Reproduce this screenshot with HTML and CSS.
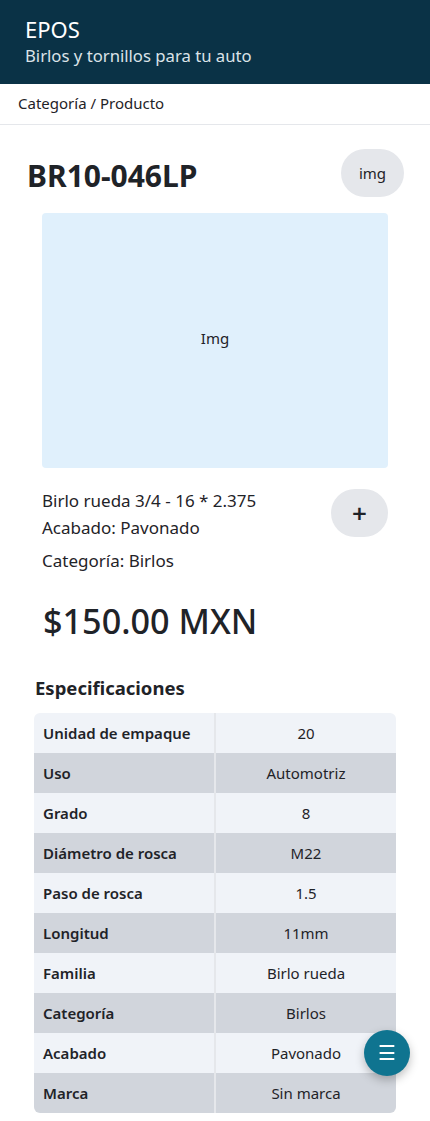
FILE: index.html
```html
<!DOCTYPE html>
<html lang="es">
<head>
<meta charset="utf-8">
<title>EPOS</title>
<link rel="stylesheet" href="styles.css">
</head>
<body>
<header class="topbar">
  <h1 class="brand">EPOS</h1>
  <p class="tagline">Birlos y tornillos para tu auto</p>
</header>
<nav class="crumbs">Categoría / Producto</nav>
<main class="product">
  <div class="title-row">
    <h2 class="sku">BR10-046LP</h2>
    <button class="pill">img</button>
  </div>
  <div class="photo">Img</div>
  <div class="info-row">
    <div class="info">
      <p class="line">Birlo rueda 3/4 - 16 * 2.375</p>
      <p class="line">Acabado: Pavonado</p>
      <p class="line cat">Categoría: Birlos</p>
    </div>
    <button class="pill plus">+</button>
  </div>
  <p class="price">$150.00 MXN</p>
  <section class="specs">
    <h3 class="specs-title">Especificaciones</h3>
    <div class="table">
      <div class="row"><div class="k">Unidad de empaque</div><div class="v">20</div></div>
      <div class="row alt"><div class="k">Uso</div><div class="v">Automotriz</div></div>
      <div class="row"><div class="k">Grado</div><div class="v">8</div></div>
      <div class="row alt"><div class="k">Diámetro de rosca</div><div class="v">M22</div></div>
      <div class="row"><div class="k">Paso de rosca</div><div class="v">1.5</div></div>
      <div class="row alt"><div class="k">Longitud</div><div class="v">11mm</div></div>
      <div class="row"><div class="k">Familia</div><div class="v">Birlo rueda</div></div>
      <div class="row alt"><div class="k">Categoría</div><div class="v">Birlos</div></div>
      <div class="row"><div class="k">Acabado</div><div class="v">Pavonado</div></div>
      <div class="row alt"><div class="k">Marca</div><div class="v">Sin marca</div></div>
    </div>
  </section>
</main>
<button class="fab">☰</button>
</body>
</html>
```
FILE: styles.css
```css
* { box-sizing: border-box; }
body {
  margin: 0;
  font-family: "Noto Sans", "Open Sans", sans-serif;
  color: #1f2328;
  background: #fff;
}
.topbar {
  background: #0a3246;
  color: #fff;
  height: 84px;
  padding: 14px 25px 0;
}
.brand {
  margin: 0;
  font-size: 22px;
  font-weight: 400;
  line-height: 30px;
}
.tagline {
  margin: 1px 0 0;
  font-size: 16.7px;
  line-height: 22px;
  color: #dbe3e8;
}
.crumbs {
  height: 41px;
  padding: 9px 18px 0;
  font-size: 15px;
  line-height: 21px;
  border-bottom: 1px solid #e5e7eb;
}
.product {
  padding: 24px 26px 0 26px;
}
.title-row {
  display: flex;
  justify-content: space-between;
  align-items: center;
  height: 48px;
}
.sku {
  margin: 0;
  font-size: 30px;
  font-weight: 700;
  padding-left: 1px;
  line-height: 40px;
  padding-top: 5px;
}
.pill {
  border: none;
  background: #e5e7eb;
  border-radius: 24px;
  height: 48px;
  width: 63px;
  font-family: inherit;
  font-size: 15px;
  color: #1f2328;
}
.photo {
  margin: 16px 16px 0;
  height: 255px;
  background: #e0f0fc;
  border-radius: 4px;
  display: flex;
  align-items: center;
  justify-content: center;
  font-size: 15px;
  padding-bottom: 6px;
}
.info-row {
  display: flex;
  justify-content: space-between;
  align-items: flex-start;
  margin: 21px 16px 0;
}
.line {
  margin: 0;
  font-size: 17px;
  line-height: 27px;
}
.line:first-child { margin-top: -2px; }
.line.cat { margin-top: 6px; }
.plus {
  width: 57px;
  font-size: 26px;
  font-weight: 600;
  line-height: 1;
}
.price {
  margin: 22px 0 0 17px;
  font-size: 34.2px;
  line-height: 50px;
  font-weight: 500;
}
.specs { margin: 29px 0 0 8px; width: 362px; }
.specs-title {
  margin: 0 0 12px 1px;
  font-size: 18.5px;
  font-weight: 700;
  line-height: 26px;
}
.table {
  border-radius: 6px;
  overflow: hidden;
}
.row {
  display: grid;
  grid-template-columns: 180px 2px 180px;
  height: 40px;
  background: #f0f3f8;
}
.row::before {
  content: "";
  grid-column: 2;
  grid-row: 1;
  background: #e5e7eb;
}
.row.alt { background: #d1d5dc; }
.k {
  grid-column: 1;
  grid-row: 1;
  padding-left: 9px;
  font-size: 15px;
  font-weight: 600;
  display: flex;
  align-items: center;
}
.v {
  grid-column: 3;
  grid-row: 1;
  font-size: 15px;
  display: flex;
  align-items: center;
  justify-content: center;
  border-radius: 0 6px 6px 0;
}
.fab {
  position: fixed;
  left: 364px;
  top: 1030px;
  width: 46px;
  height: 46px;
  border-radius: 50%;
  border: none;
  background: #0f7490;
  color: #fff;
  font-size: 20px;
  box-shadow: 0 4px 10px rgba(0,0,0,0.25);
}
```
